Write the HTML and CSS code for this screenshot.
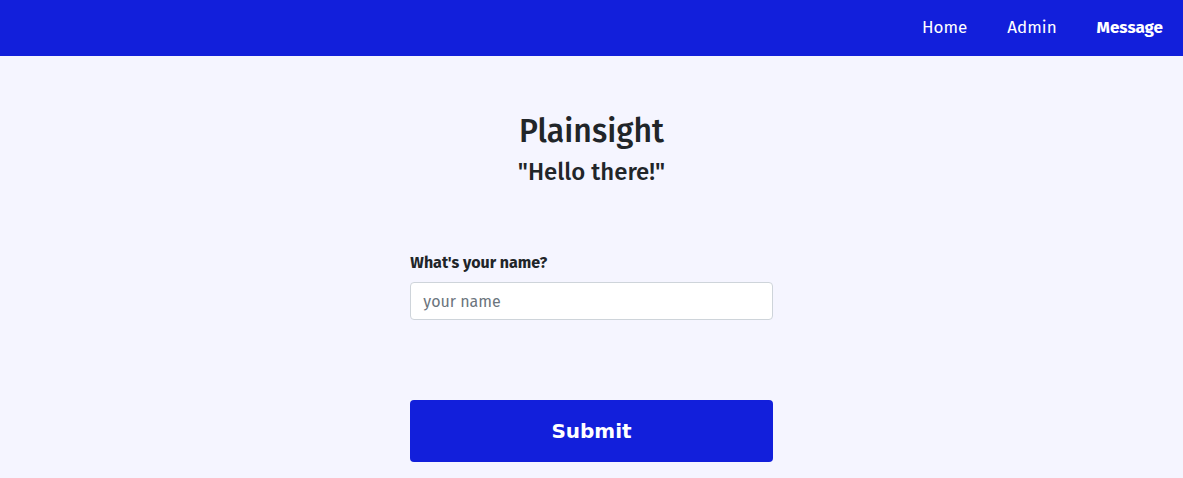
FILE: index.html
```html
<!DOCTYPE html>
<html lang="en">
<head>
<meta charset="utf-8">
<meta name="viewport" content="width=device-width, initial-scale=1">
<title>Plainsight</title>
<link rel="stylesheet" href="styles.css">
</head>
<body>
<nav class="navbar">
  <a class="nav-link" href="#home">Home</a>
  <a class="nav-link" href="#admin">Admin</a>
  <a class="nav-link nav-link-active" href="#message" aria-current="page">Message</a>
</nav>
<main class="content">
  <header class="heading">
    <h1 class="title">Plainsight</h1>
    <h2 class="greeting">"Hello there!"</h2>
  </header>
  <form class="form">
    <label class="label" for="name">What's your name?</label>
    <input class="input" id="name" name="name" type="text" placeholder="your name">
    <button class="submit" type="submit">Submit</button>
  </form>
</main>
</body>
</html>
```
FILE: styles.css
```css
* {
  box-sizing: border-box;
}

body {
  margin: 0;
  background: #f5f5ff;
  color: #212529;
  font-family: "Fira Sans", "Noto Sans", sans-serif;
  font-size: 16px;
  line-height: 24px;
}

.navbar {
  display: flex;
  justify-content: flex-end;
  gap: 40px;
  padding: 16px 20px;
  background: #121fdb;
}

.nav-link {
  color: #fff;
  font-size: 17px;
  text-decoration: none;
}

.nav-link-active {
  font-weight: 700;
}

.content {
  padding: 56px 0 16px;
}

.heading {
  text-align: center;
}

.title,
.greeting {
  margin: 0;
  font-weight: 500;
}

.title {
  font-size: 32px;
  line-height: 38px;
}

.greeting {
  margin-top: 8px;
  font-size: 24px;
  line-height: 28px;
}

.form {
  display: flex;
  flex-direction: column;
  width: 33.3333%;
  min-width: 290px;
  margin: 64px auto 0;
  padding: 0 16px;
}

.label {
  margin-bottom: 6px;
  font-weight: 700;
  line-height: 26px;
}

.input {
  padding: 7px 12px 5px;
  border: 1px solid #ced4da;
  border-radius: 4px;
  background: #fff;
  color: #212529;
  font: inherit;
}

.input::placeholder {
  color: #6c757d;
  opacity: 1;
}

.submit {
  margin-top: 80px;
  padding: 16px;
  border: 0;
  border-radius: 4px;
  background: #121fdb;
  color: #fff;
  font-family: "DejaVu Sans", sans-serif;
  font-size: 20px;
  font-weight: 700;
  line-height: 30px;
}
```
